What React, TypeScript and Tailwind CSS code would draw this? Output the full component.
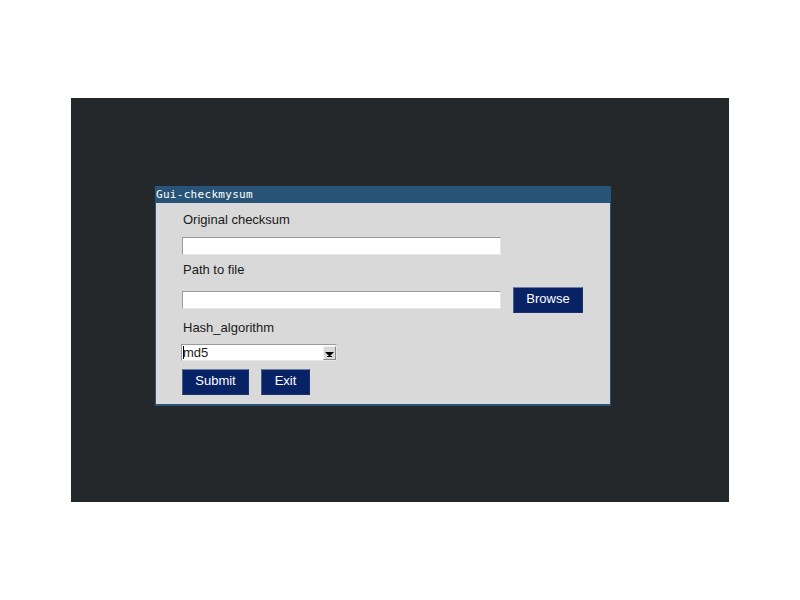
const sans = { fontFamily: '"Liberation Sans", Arial, sans-serif' };

function Entry({ width }: { width: string }) {
  return (
    <div
      className={`${width} h-[18px] bg-white border-t border-l border-[#9a9a9a] border-r border-b border-r-[#e6e6e6] border-b-[#e6e6e6]`}
    />
  );
}

function TkButton({ label, width }: { label: string; width: string }) {
  return (
    <button
      className={`${width} h-[26px] pb-[2px] bg-[#082266] text-white text-[13px] border border-[#1b2f6e] border-t-[#6f7fa6] border-l-[#4a5c8a] flex items-center justify-center`}
      style={sans}
    >
      {label}
    </button>
  );
}

export default function App() {
  return (
    <div className="w-[800px] h-[600px] bg-white pt-[98px] pl-[71px]">
      <div className="w-[658px] h-[404px] bg-[#24282b] pt-[88px] pl-[84px]">
        {/* window */}
        <div className="w-[456px] h-[220px] bg-[#285577] px-px pb-[2px] flex flex-col">
          <div
            className="h-[17px] text-white text-[11px] leading-[17px] tracking-[0.3px]"
            style={{ fontFamily: '"DejaVu Sans Mono", "Liberation Mono", monospace' }}
          >
            Gui-checkmysum
          </div>
          <div className="flex-1 bg-[#d9d9d9] pl-[26px] text-[13px] text-[#1a1a1a]" style={sans}>
            <div className="mt-[9px] h-[16px] leading-[16px] pl-px">Original checksum</div>
            <div className="mt-[9px]">
              <Entry width="w-[319px]" />
            </div>
            <div className="mt-[7px] h-[16px] leading-[16px] pl-px">Path to file</div>
            <div className="mt-[9px] flex items-center gap-[12px]">
              <Entry width="w-[319px]" />
              <TkButton label="Browse" width="w-[70px]" />
            </div>
            <div className="mt-[7px] h-[16px] leading-[16px] pl-px">Hash_algorithm</div>
            <div className="mt-[8px] -ml-px w-[156px] h-[17px] bg-white border border-[#9a9a9a] border-r-[#e6e6e6] border-b-[#e6e6e6] flex items-center">
              <div className="flex-1 flex items-center h-full pl-px">
                <span className="w-px h-[13px] bg-black" />
                <span className="leading-[15px] -ml-px">md5</span>
              </div>
              <div className="w-[13px] h-[14px] bg-[#d9d9d9] border border-[#f0f0f0] border-r-[#888] border-b-[#888] flex items-end justify-center pb-[2px]">
                <svg width="9" height="5" viewBox="0 0 9 5">
                  <path d="M0 0h9L4.5 4.5z" fill="#000" />
                  <rect x="2" y="4" width="5" height="1" fill="#000" />
                </svg>
              </div>
            </div>
            <div className="mt-[8px] flex gap-[12px]">
              <TkButton label="Submit" width="w-[67px]" />
              <TkButton label="Exit" width="w-[49px]" />
            </div>
          </div>
        </div>
      </div>
    </div>
  );
}
